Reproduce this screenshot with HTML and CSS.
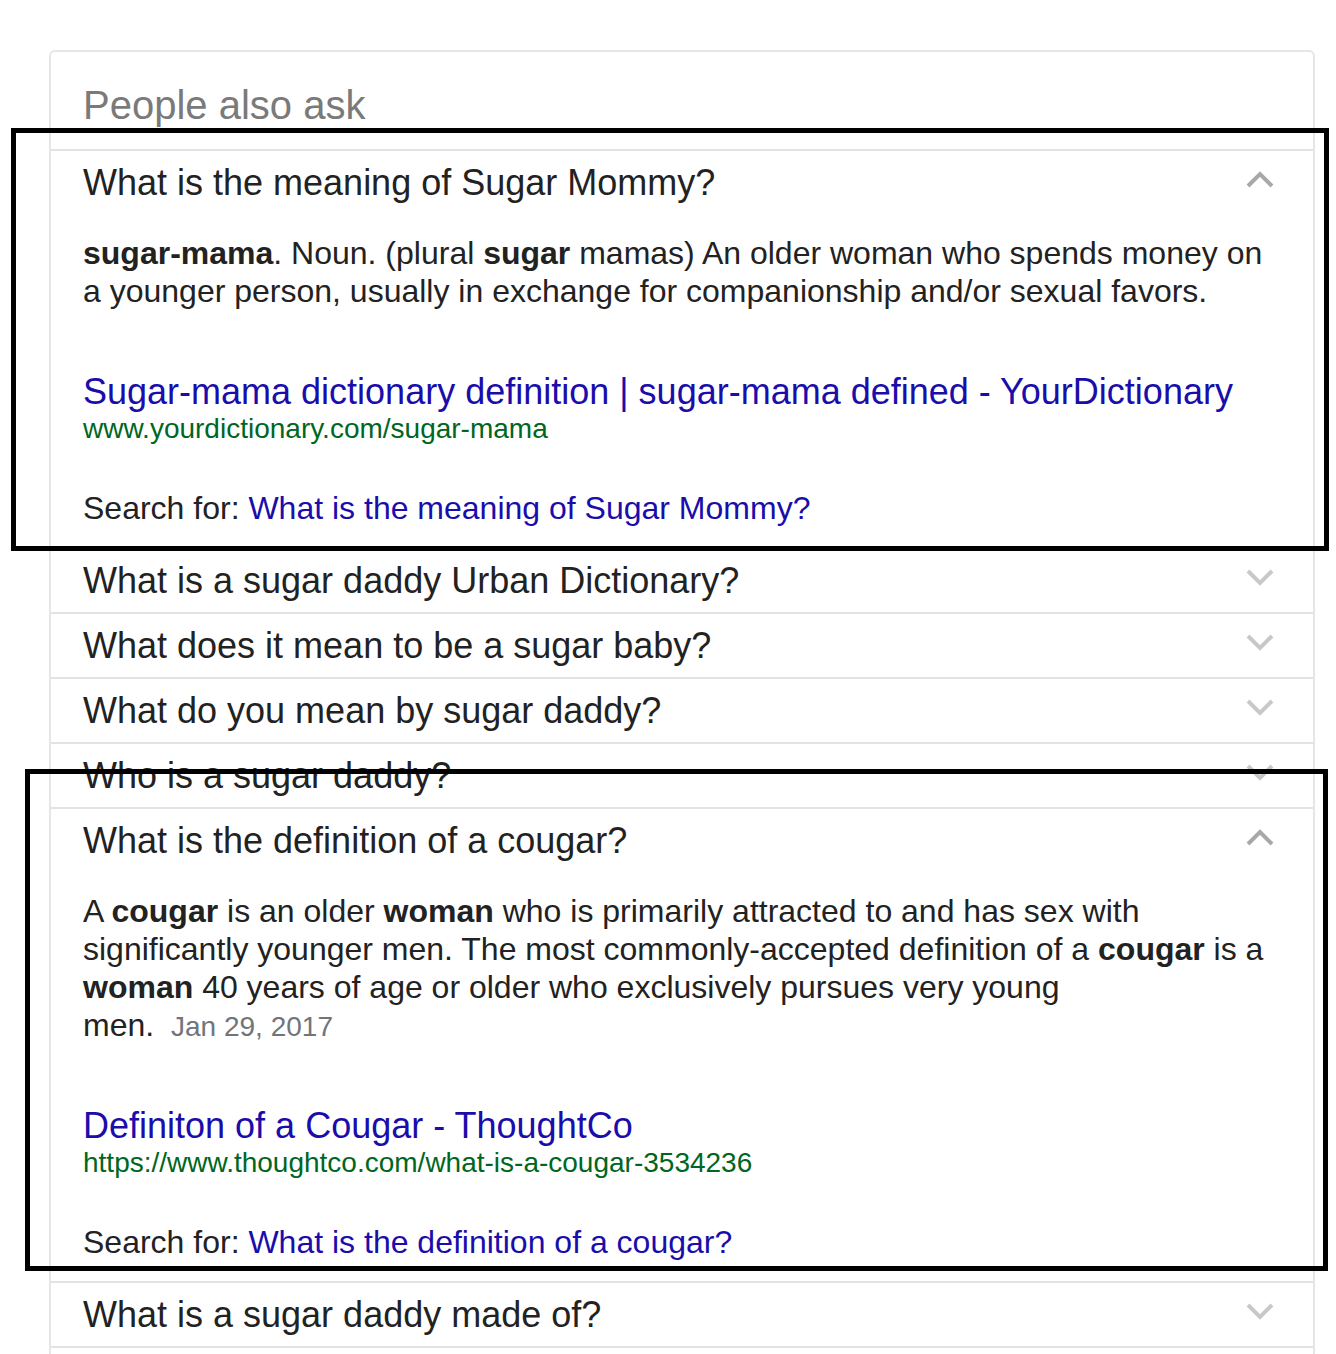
FILE: index.html
```html
<!DOCTYPE html>
<html lang="en">
<head>
<meta charset="utf-8">
<title>People also ask</title>
<link rel="stylesheet" href="styles.css">
</head>
<body>
<div class="card">
  <div class="heading">People also ask</div>

  <div class="item">
    <div class="q"><span class="qtext">What is the meaning of Sugar Mommy?</span><svg class="chev up" viewBox="0 0 28 18" width="28" height="18"><polyline points="2,16 14,4 26,16"/></svg></div>
    <div class="answer">
      <div class="snippet"><b>sugar-mama</b>. Noun. (plural <b>sugar</b> mamas) An older woman who spends money on a younger person, usually in exchange for companionship and/or sexual favors.</div>
      <a class="title" href="#">Sugar-mama dictionary definition | sugar-mama defined - YourDictionary</a>
      <div class="url">www.yourdictionary.com/sugar-mama</div>
      <div class="searchfor">Search for: <a href="#">What is the meaning of Sugar Mommy?</a></div>
    </div>
  </div>

  <div class="item">
    <div class="q"><span class="qtext">What is a sugar daddy Urban Dictionary?</span><svg class="chev down" viewBox="0 0 28 18" width="28" height="18"><polyline points="2,3 14,15 26,3"/></svg></div>
  </div>
  <div class="item">
    <div class="q"><span class="qtext">What does it mean to be a sugar baby?</span><svg class="chev down" viewBox="0 0 28 18" width="28" height="18"><polyline points="2,3 14,15 26,3"/></svg></div>
  </div>
  <div class="item">
    <div class="q"><span class="qtext">What do you mean by sugar daddy?</span><svg class="chev down" viewBox="0 0 28 18" width="28" height="18"><polyline points="2,3 14,15 26,3"/></svg></div>
  </div>
  <div class="item">
    <div class="q"><span class="qtext">Who is a sugar daddy?</span><svg class="chev down" viewBox="0 0 28 18" width="28" height="18"><polyline points="2,3 14,15 26,3"/></svg></div>
  </div>

  <div class="item">
    <div class="q"><span class="qtext">What is the definition of a cougar?</span><svg class="chev up" viewBox="0 0 28 18" width="28" height="18"><polyline points="2,16 14,4 26,16"/></svg></div>
    <div class="answer">
      <div class="snippet">A <b>cougar</b> is an older <b>woman</b> who is primarily attracted to and has sex with significantly younger men. The most commonly-accepted definition of a <b>cougar</b> is a <b>woman</b> 40 years of age or older who exclusively pursues very young <span class="nowrap">men. <span class="date">Jan 29, 2017</span></span></div>
      <a class="title" href="#">Definiton of a Cougar - ThoughtCo</a>
      <div class="url">https://www.thoughtco.com/what-is-a-cougar-3534236</div>
      <div class="searchfor">Search for: <a href="#">What is the definition of a cougar?</a></div>
    </div>
  </div>

  <div class="item last">
    <div class="q"><span class="qtext">What is a sugar daddy made of?</span><svg class="chev down" viewBox="0 0 28 18" width="28" height="18"><polyline points="2,3 14,15 26,3"/></svg></div>
  </div>
  <div class="tail"></div>
</div>

<div class="annot annot-top"></div>
<div class="annot annot-bottom"></div>
</body>
</html>
```

FILE: styles.css
```css
html, body {
  margin: 0;
  padding: 0;
  background: #ffffff;
}

body {
  font-family: "Liberation Sans", Arial, sans-serif;
  color: #222222;
  position: relative;
  min-height: 1354px;
  overflow: hidden;
}

.card {
  margin: 50px 0 0 49px;
  width: 1262px;
  border: 2px solid #e6e6e6;
  border-radius: 6px;
  background: #ffffff;
}

.heading {
  font-size: 40px;
  line-height: 48px;
  color: #7a7a7a;
  padding: 29px 32px 20px 32px;
}

.item {
  border-top: 2px solid #e3e3e3;
}

.item.last {
  border-bottom: 2px solid #e3e3e3;
}

.q {
  height: 63px;
  display: flex;
  align-items: center;
  justify-content: space-between;
  padding: 0 39px 0 32px;
}

.qtext {
  font-size: 36px;
  line-height: 44px;
  color: #222222;
  white-space: nowrap;
}

.chev {
  flex: none;
  margin-bottom: 8px;
  fill: none;
  stroke-width: 4;
  stroke-linecap: butt;
  stroke-linejoin: miter;
}

.chev.up {
  stroke: #a8a8a8;
}

.chev.down {
  stroke: #c8c8c8;
}

.answer {
  padding: 20px 32px 20px 32px;
}

.snippet {
  font-size: 32px;
  line-height: 38px;
  color: #222222;
}

.snippet b {
  font-weight: bold;
}

.nowrap {
  white-space: nowrap;
}

.date {
  font-size: 28px;
  line-height: 30px;
  color: #70757a;
  margin-left: 8px;
}

.title {
  display: block;
  margin-top: 62px;
  font-size: 36px;
  line-height: 40px;
  color: #1a0dab;
  text-decoration: none;
  white-space: nowrap;
}

.url {
  margin-top: 1px;
  font-size: 28px;
  line-height: 32px;
  color: #006621;
}

.searchfor {
  margin-top: 44px;
  font-size: 32px;
  line-height: 38px;
  color: #222222;
}

.searchfor a {
  color: #1a0dab;
  text-decoration: none;
}

.tail {
  height: 40px;
}

.annot {
  position: absolute;
  border: 5px solid #000000;
  box-sizing: border-box;
  pointer-events: none;
}

.annot-top {
  left: 11px;
  top: 128px;
  width: 1318px;
  height: 423px;
}

.annot-bottom {
  left: 25px;
  top: 769px;
  width: 1303px;
  height: 502px;
}
```
